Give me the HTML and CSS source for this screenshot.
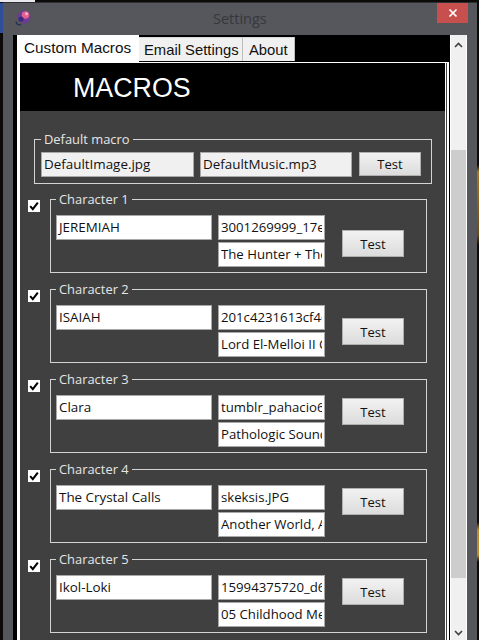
FILE: index.html
```html
<!DOCTYPE html>
<html lang="en">
<head>
<meta charset="utf-8">
<title>Settings</title>
<link rel="stylesheet" href="styles.css">
</head>
<body>
<div class="window">
  <header class="titlebar">
    <svg class="app-icon" width="18" height="18" viewBox="0 0 18 18">
      <circle cx="10" cy="8" r="6.500" fill="#6d3a96"/>
      <circle cx="11.500" cy="6" r="3.800" fill="#e0608f"/>
      <circle cx="12.500" cy="4.800" r="1.500" fill="#f4b6cf"/>
      <circle cx="7" cy="10" r="2.600" fill="#3a2a7a"/>
      <path d="M2 12.500c.5 3 3 4 5 3" fill="none" stroke="#23324f" stroke-width="1.400"/>
    </svg>
    <span class="title">Settings</span>
    <span class="close"><svg width="10" height="10" viewBox="0 0 10 10"><path d="M1.5 1.5l7 7M8.500 1.500l-7 7" stroke="#fff" stroke-width="1.700"/></svg></span>
  </header>
  <div class="client">
    <div class="main">
      <nav class="tabs">
        <span class="tab tab-active">Custom Macros</span>
        <span class="tab tab-email">Email Settings</span>
        <span class="tab tab-about">About</span>
      </nav>
      <div class="page">
        <div class="banner"><h1>MACROS</h1></div>
        <div class="panel">
          <fieldset class="default-box">
            <legend>Default macro</legend>
            <div class="field field-grey field-wide">DefaultImage.jpg</div>
            <div class="field field-grey field-wide2">DefaultMusic.mp3</div>
            <button class="btn btn-default">Test</button>
          </fieldset>

          <div class="row">
            <span class="check"><svg width="10" height="10" viewBox="0 0 10 10"><path d="M1.200 5.200l2.600 2.900 5-6.500" fill="none" stroke="#000" stroke-width="2"/></svg></span>
            <fieldset class="char">
              <legend>Character 1</legend>
              <div class="field field-name">JEREMIAH</div>
              <div class="files"><div class="field field-file"><span class="clip">3001269999_17eb4a</span></div><div class="field field-file"><span class="clip">The Hunter + The Beast</span></div></div>
              <button class="btn btn-1">Test</button>
            </fieldset>
          </div>

          <div class="row">
            <span class="check"><svg width="10" height="10" viewBox="0 0 10 10"><path d="M1.200 5.200l2.600 2.900 5-6.500" fill="none" stroke="#000" stroke-width="2"/></svg></span>
            <fieldset class="char">
              <legend>Character 2</legend>
              <div class="field field-name">ISAIAH</div>
              <div class="files"><div class="field field-file"><span class="clip">201c4231613cf4d8a</span></div><div class="field field-file"><span class="clip">Lord El-Melloi II Case</span></div></div>
              <button class="btn btn-2">Test</button>
            </fieldset>
          </div>

          <div class="row">
            <span class="check"><svg width="10" height="10" viewBox="0 0 10 10"><path d="M1.200 5.200l2.600 2.900 5-6.500" fill="none" stroke="#000" stroke-width="2"/></svg></span>
            <fieldset class="char">
              <legend>Character 3</legend>
              <div class="field field-name">Clara</div>
              <div class="files"><div class="field field-file"><span class="clip">tumblr_pahacio6a1</span></div><div class="field field-file"><span class="clip">Pathologic Soundtrack</span></div></div>
              <button class="btn">Test</button>
            </fieldset>
          </div>

          <div class="row">
            <span class="check"><svg width="10" height="10" viewBox="0 0 10 10"><path d="M1.200 5.200l2.600 2.900 5-6.500" fill="none" stroke="#000" stroke-width="2"/></svg></span>
            <fieldset class="char">
              <legend>Character 4</legend>
              <div class="field field-name">The Crystal Calls</div>
              <div class="files"><div class="field field-file"><span class="clip">skeksis.JPG</span></div><div class="field field-file"><span class="clip">Another World, Another</span></div></div>
              <button class="btn">Test</button>
            </fieldset>
          </div>

          <div class="row">
            <span class="check"><svg width="10" height="10" viewBox="0 0 10 10"><path d="M1.200 5.200l2.600 2.900 5-6.500" fill="none" stroke="#000" stroke-width="2"/></svg></span>
            <fieldset class="char">
              <legend>Character 5</legend>
              <div class="field field-name">Ikol-Loki</div>
              <div class="files"><div class="field field-file"><span class="clip">15994375720_d69a1</span></div><div class="field field-file"><span class="clip">05 Childhood Memories</span></div></div>
              <button class="btn">Test</button>
            </fieldset>
          </div>
        </div>
      </div>
    </div>
    <aside class="scrollbar">
      <svg class="arrow" width="9" height="6" viewBox="0 0 9 6"><path d="M1 5l3.500-3.500L8 5" fill="none" stroke="#404040" stroke-width="1.600"/></svg>
      <div class="thumb"></div>
      <svg class="arrow" width="9" height="6" viewBox="0 0 9 6"><path d="M1 1l3.500 3.500L8 1" fill="none" stroke="#404040" stroke-width="1.600"/></svg>
    </aside>
  </div>
</div>
</body>
</html>
```
FILE: styles.css
```css
* { box-sizing: border-box; }
html, body { margin: 0; height: 640px; overflow: hidden; }
body {
  width: 479px;
  background-color: #0d0b09;
  background-image:
    linear-gradient(#e8e8ee, #e8e8ee),
    linear-gradient(#2f4f9a, #2f4f9a),
    linear-gradient(#0d0b09 165px, #a7761f 172px, #6b4a1c 235px, #0d0b09 245px, #0d0b09 522px, #c08a2a 530px, #c08a2a 555px, #0d0b09 562px);
  background-size: 35px 2px, 3px 30px, 2px 640px;
  background-position: 0 0, 0 3px, 477px 0;
  background-repeat: no-repeat;
  padding: 2px 0 0 3px;
  font-family: "Open Sans", "Noto Sans", sans-serif;
}
.window {
  width: 474px;
  height: 638px;
  background: #55575c;
  border-top: 1px solid #2e2f33;
  padding: 0 10px;
  display: flex;
  flex-direction: column;
}
.titlebar {
  height: 32px;
  flex: none;
  position: relative;
}
.app-icon { position: absolute; left: 1px; top: 6px; }
.title {
  position: absolute;
  left: 200px;
  top: 6px;
  font-size: 14.500px;
  color: #37383d;
  line-height: 20px;
}
.close {
  position: absolute;
  right: -1px;
  top: 0;
  width: 31px;
  height: 20px;
  background: #c7504f;
  display: flex;
  align-items: center;
  justify-content: center;
}
.client {
  flex: 1;
  display: flex;
  min-height: 0;
  background: #000;
}
.main {
  width: 436px;
  flex: none;
  padding-left: 4px;
  display: flex;
  flex-direction: column;
}
.tabs { display: flex; align-items: flex-start; height: 27px; flex: none; }
.tab {
  font-family: "Liberation Sans", Arial, sans-serif;
  font-size: 14.800px;
  color: #111;
  background: #f0f0f0;
  height: 24px;
  margin-top: 2px;
  line-height: 24px;
  border-right: 1px solid #bdbdbd;
  border-top: 1px solid #d8d8d8;
}
.tab-active {
  background: #fff;
  height: 27px;
  margin-top: 0;
  line-height: 26px;
  width: 122px;
  padding: 0 0 0 7px;
  border: 0;
  font-size: 15.300px;
}
.tab-email { width: 104px; padding-left: 5px; }
.tab-about { width: 52px; padding-left: 6px; }
.page {
  flex: 1;
  min-height: 0;
  background: #404040;
  border: solid #fff;
  border-width: 1px 2px 0 3px;
  padding-right: 1px;
  overflow: hidden;
}
.banner {
  background: #000;
  height: 48px;
  padding: 0 0 0 53px;
  border-right: 1px solid #fff;
}
.banner h1 {
  margin: 0;
  font-family: "Liberation Sans", Arial, sans-serif;
  font-weight: 400;
  font-size: 26.800px;
  line-height: 51px;
  color: #fff;
}
.panel {
  padding: 20px 0 0 14px;
  display: flex;
  flex-direction: column;
  border-right: 1px solid #fff;
  height: 540px;
}
fieldset {
  margin: 0;
  border: 1px solid #d4d4d4;
  display: block;
  min-inline-size: 0;
}
legend {
  font-size: 12.900px;
  line-height: 16px;
  color: #e6e6e6;
  padding: 0 3px;
}
.default-box {
  width: 398px;
  height: 53px;
  padding: 0 6px;
  display: flex;
  gap: 6px;
  align-items: flex-start;
  flex: none;
}
.field {
  font-size: 13.400px;
  line-height: 22px;
  height: 25px;
  padding: 0 2px;
  color: #111;
  background: #fff;
  border: 1px solid #a8a8a8;
  overflow: hidden;
  white-space: nowrap;
}
.field-grey { background: #f0f0f0; margin-top: 5px; }
.field-wide { width: 153px; }
.field-wide2 { width: 152px; }
.btn {
  font-family: "Open Sans", "Noto Sans", sans-serif;
  font-size: 13px;
  color: #111;
  width: 62px;
  height: 27px;
  padding: 0;
  background: linear-gradient(#f2f2f2, #dcdcdc);
  border: 1px solid #b0b0b0;
  margin-top: 11px;
}
.btn-default { height: 24px; margin: 5px 0 0 1px; }
.btn-1 { margin-top: 23px; }
.btn-2 { margin-top: 21px; }
.row {
  display: flex;
  align-items: flex-start;
  margin-top: 7px;
  height: 82px;
  flex: none;
}
.row + .row { margin-top: 8px; }
.check {
  width: 12px;
  height: 12px;
  background: #fff;
  margin: 9px 10px 0 -6px;
  flex: none;
  display: flex;
  align-items: center;
  justify-content: center;
}
.char {
  width: 377px;
  height: 82px;
  padding: 0 0 0 5px;
  display: flex;
  align-items: flex-start;
}
.field-name { width: 156px; margin-top: 8px; }
.files { display: flex; flex-direction: column; gap: 2px; margin: 8px 0 0 6px; width: 107px; }
.field-file { width: 107px; font-size: 13.200px; }
.clip { display: block; overflow: hidden; }
.char .btn { margin-left: 17px; }
.scrollbar {
  flex: none;
  width: 17px;
  margin-left: 1px;
  background: #f0f0f0;
  border: solid #fff;
  border-width: 0 1px;
  display: flex;
  flex-direction: column;
  align-items: center;
  padding-top: 7px;
}
.arrow { flex: none; }
.thumb {
  width: 15px;
  height: 428px;
  margin-top: 102px;
  background: #cdcdcd;
  margin-bottom: 52px;
}
```
